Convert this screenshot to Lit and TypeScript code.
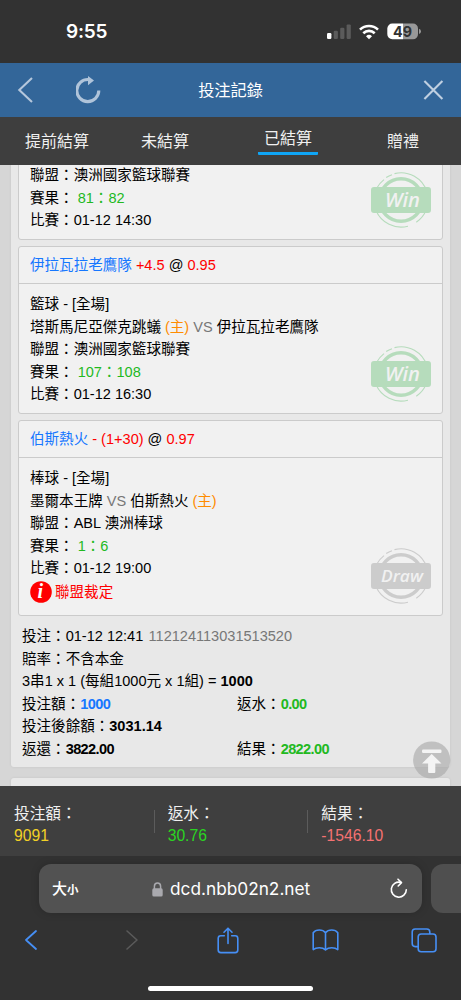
import { LitElement, html, css, svg, nothing } from "lit";
import { customElement, property } from "lit/decorators.js";

@customElement("result-stamp")
class ResultStamp extends LitElement {
  @property() kind = "Win";
  static styles = css`
    :host { display: block; width: 60px; height: 56px; }
    svg { display: block; }
    .win { color: #b6dcbc; }
    .draw { color: #cccccc; }
    text { font-family: "Open Sans", sans-serif; font-style: italic; font-weight: 600; fill: #f1f1f1; }
  `;
  render() {
    const win = this.kind === "Win";
    return html`<svg class=${win ? "win" : "draw"} width="60" height="56" viewBox="0 0 60 56">
      <circle cx="30" cy="28" r="21.3" fill="none" stroke="currentColor" stroke-width="3.4"/>
      <g fill="none" stroke="currentColor" stroke-width="1.1">
        <path d="M23.5 1.6A27.2 27.2 0 0 1 56 20"/>
        <path d="M15.2 5.5A27 27 0 0 1 21 2.7"/>
        <path d="M5.5 16.5A27 27 0 0 1 13 7.6"/>
        <path d="M5 38.5A27.2 27.2 0 0 0 37 54.2"/>
        <path d="M45.3 50.2A27 27 0 0 0 55 38.5"/>
      </g>
      <rect x="0" y="15" width="60" height="26" rx="3" fill="currentColor"/>
      ${win
        ? svg`<text x="14" y="35.4" font-size="19.5" textLength="35" lengthAdjust="spacingAndGlyphs">Win</text>`
        : svg`<text x="10" y="34.3" font-size="17" textLength="42" lengthAdjust="spacingAndGlyphs">Draw</text>`}
    </svg>`;
  }
}

interface Bet {
  head?: [string, string, string];
  sport?: string;
  home?: string;
  away?: string;
  host?: "home" | "away";
  league: string;
  score: string;
  time: string;
  ruling?: string;
  stamp: string;
}

const bets: Bet[] = [
  { league: "澳洲國家籃球聯賽", score: "81：82", time: "01-12 14:30", stamp: "Win" },
  {
    head: ["伊拉瓦拉老鷹隊", "+4.5", "0.95"], sport: "籃球", home: "塔斯馬尼亞傑克跳蟻", away: "伊拉瓦拉老鷹隊",
    host: "home", league: "澳洲國家籃球聯賽", score: "107：108", time: "01-12 16:30", stamp: "Win",
  },
  {
    head: ["伯斯熱火", "- (1+30)", "0.97"], sport: "棒球", home: "墨爾本王牌", away: "伯斯熱火",
    host: "away", league: "ABL 澳洲棒球", score: "1：6", time: "01-12 19:00", ruling: "聯盟裁定", stamp: "Draw",
  },
];

@customElement("app-root")
class AppRoot extends LitElement {
  static styles = css`
    :host {
      display: flex; flex-direction: column; width: 461px; height: 1000px; overflow: hidden;
      background: #323232; color: #000;
      font: 14.55px/22.6px "Liberation Sans", "Noto Sans CJK TC", sans-serif;
    }
    * { box-sizing: border-box; }
    svg { display: block; flex: none; }
    .status { height: 63px; flex: none; display: flex; align-items: center; padding: 0 40px 0 66px; color: #fff; }
    .clock { font: 600 19px/22px Inter, sans-serif; letter-spacing: -0.2px; flex: 1; }
    .indicators { display: flex; align-items: center; gap: 8px; }
    .indicators text { font: 700 14.5px Inter, sans-serif; fill: #323232; }
    .nav { height: 54px; flex: none; background: #336699; display: grid; grid-template-columns: 150px 1fr 150px; align-items: center; color: #fff; }
    .nav-left { display: flex; align-items: center; gap: 42px; padding-left: 17px; }
    .nav-right { display: flex; justify-content: flex-end; padding-right: 17px; }
    .title { text-align: center; font-size: 16.2px; }
    .tabs { height: 48px; flex: none; background: #3e3e3e; color: #f0f0f0; font-size: 16px; display: grid; grid-template-columns: 114px 102px 144px 86px; justify-items: center; align-items: center; }
    .tab { line-height: 24px; padding-top: 2px; }
    .tab.on { padding: 0 6px; border-bottom: 3px solid #0fa5f5; line-height: 26px; margin-top: -1px; border-radius: 1px; }
    .scroll { height: 621px; flex: none; overflow: hidden; background: #d6d6d6; position: relative; }
    .group { margin: 0 11px; padding: 0 7px 7px; background: #e8e8e8; border-radius: 3px; box-shadow: 0 0 3px rgba(0,0,0,.07); }
    .group.main { margin-top: -11px; }
    .group.next { margin-top: 11px; height: 60px; }
    .card { position: relative; background: #f1f1f1; border: 1px solid #cbcbcb; border-radius: 3px; margin-bottom: 6px; }
    .card:last-of-type { margin-bottom: 0; }
    .head { height: 37px; line-height: 37px; padding: 0 11px; border-bottom: 1px solid #cbcbcb; }
    .body { padding: 9px 11px 7px; }
    .body.partial { padding-bottom: 7.2px; }
    .stamp { position: absolute; right: 11px; bottom: 11px; }
    .blue { color: #1677ff; }
    .red { color: #ff0000; }
    .orange { color: #ff8c00; }
    .green { color: #22b91f; }
    .gray { color: #777; }
    .ruling { display: flex; align-items: center; gap: 3px; height: 25px; margin-bottom: 3px; color: #ff0000; }
    .ruling text { font: italic 700 20px "Liberation Serif", serif; fill: #fff; }
    .summary { padding: 9px 4px 0; }
    .pair { display: grid; grid-template-columns: 215px 1fr; }
    .pair b { letter-spacing: -0.6px; }
    .top { position: absolute; left: 413px; top: 576px; }
    .totals { height: 70px; flex: none; background: #3f3f3f; color: #f0f0f0; display: grid; grid-template-columns: repeat(3, 1fr); align-items: start; padding-top: 17px; font-size: 15.7px; line-height: 22px; }
    .total { padding-left: 14px; position: relative; }
    .total + .total::before { content: ""; position: absolute; left: 0; top: 7px; width: 1px; height: 23px; background: #5c5c5c; }
    .yellow { color: #f2d026; }
    .lime { color: #2bd422; }
    .pink { color: #f47272; }
    .bar { display: flex; gap: 9px; padding: 8px 0 0 39px; height: 57px; flex: none; }
    .address { width: 383px; height: 49px; flex: none; border-radius: 12px; background: #525252; color: #fff; display: grid; grid-template-columns: 113px 1fr 32px; align-items: center; box-shadow: 0 0 8px rgba(0,0,0,.18); }
    .aa { padding-left: 13px; font: 500 15px/20px "Noto Sans CJK TC", sans-serif; }
    .small { font-size: 11.5px; font-weight: 700; }
    .url { display: flex; align-items: center; gap: 7px; font: 400 17.25px/24px Inter, sans-serif; padding-top: 1px; }
    .side { width: 60px; height: 49px; flex: none; border-radius: 12px; background: #4f4f4f; }
    .tools { height: 54px; flex: none; display: grid; grid-template-columns: 101px 92px 95px 99px 26px; align-items: center; padding-left: 24px; color: #468ff5; }
    .dim { color: #5a5a5a; }
    .home { width: 165px; height: 5px; border-radius: 3px; background: #fff; margin: 19px auto 0; }
  `;

  private team(name: string, host: boolean) {
    return html`${name}${host ? html` <span class="orange">(主)</span>` : nothing}`;
  }

  private card(b: Bet) {
    return html`<section class="card">
      ${b.head ? html`<div class="head"><span class="blue">${b.head[0]}</span> <span class="red">${b.head[1]}</span> @ <span class="red">${b.head[2]}</span></div>` : nothing}
      <div class="body ${b.head ? "" : "partial"}">
        ${b.sport ? html`<div>${b.sport} - [全場]</div>
          <div>${this.team(b.home!, b.host === "home")} <span class="gray">VS</span> ${this.team(b.away!, b.host === "away")}</div>` : nothing}
        <div>聯盟：${b.league}</div>
        <div>賽果： <span class="green">${b.score}</span></div>
        <div>比賽：${b.time}</div>
        ${b.ruling ? html`<div class="ruling">
          <svg width="22" height="22" viewBox="0 0 22 22"><circle cx="11" cy="11" r="10.8" fill="#f00"/><text x="7.6" y="17.3">i</text></svg>
          <span>${b.ruling}</span></div>` : nothing}
      </div>
      <result-stamp class="stamp" .kind=${b.stamp}></result-stamp>
    </section>`;
  }

  render() {
    return html`
      <div class="status">
        <div class="clock">9:55</div>
        <div class="indicators">
          <svg width="24" height="16" viewBox="0 0 24 16">
            <rect x="0" y="9" width="4.4" height="6" rx="1.2" fill="#fff"/>
            <g fill="#5b5b5b"><rect x="6.7" y="6.7" width="4.2" height="8.3" rx="1.2"/><rect x="13.2" y="3.7" width="4.2" height="11.3" rx="1.2"/><rect x="19.6" y="0.4" width="4.2" height="14.6" rx="1.2"/></g>
          </svg>
          <svg width="20" height="16" viewBox="0 0 20 16" fill="none" stroke="#fff" stroke-width="2.6">
            <path d="M1 5.6A13 13 0 0 1 19 5.6"/><path d="M4.3 9.2A8.2 8.2 0 0 1 15.7 9.2"/>
            <path d="M10 15.2L7 12.2A4.4 4.4 0 0 1 13 12.2Z" fill="#fff" stroke="none"/>
          </svg>
          <svg width="34" height="17" viewBox="0 0 34 17">
            <path d="M16 0.5H5.5A5 5 0 0 0 .3 5.5V11A5 5 0 0 0 5.5 16.2H16Z" fill="#fff"/>
            <path d="M16 0.5H26A5 5 0 0 1 31 5.5V11A5 5 0 0 1 26 16.2H16Z" fill="#999"/>
            <path d="M32 5.8Q34 6.6 34 8.4T32 11Z" fill="#999"/>
            <text x="6" y="13.6" textLength="19" lengthAdjust="spacingAndGlyphs">49</text>
          </svg>
        </div>
      </div>
      <div class="nav">
        <div class="nav-left">
          <svg width="17" height="28" viewBox="0 0 17 28" fill="none" stroke="#b5c7dc" stroke-width="2.1"><path d="M15 2L2.3 14L15 26"/></svg>
          <svg width="26" height="28" viewBox="0 0 26 28"><path d="M12.5 3.6A11 11 0 1 0 22.8 14.5" fill="none" stroke="#b0c4da" stroke-width="3.1"/><path d="M12 0L18 4.5L12 9.2Z" fill="#b0c4da"/></svg>
        </div>
        <div class="title">投注記錄</div>
        <div class="nav-right"><svg width="21" height="20" viewBox="0 0 21 20" fill="none" stroke="#c0d0e1" stroke-width="2.1"><path d="M1.4 1L19.4 19M19.4 1L1.4 19"/></svg></div>
      </div>
      <div class="tabs">
        <div class="tab">提前結算</div><div class="tab">未結算</div><div class="tab on">已結算</div><div class="tab">贈禮</div>
      </div>
      <div class="scroll">
        <div class="group main">
          ${bets.map((b) => this.card(b))}
          <div class="summary">
            <div>投注：01-12 12:41 <span class="gray">&hairsp;112124113031513520</span></div>
            <div>賠率：不含本金</div>
            <div>3串1 x 1 (每組1000元 x 1組) = <b>1000</b></div>
            <div class="pair"><span>投注額：<b class="blue">1000</b></span><span>返水：<b class="green">0.00</b></span></div>
            <div>投注後餘額：<b>3031.14</b></div>
            <div class="pair"><span>返還：<b>3822.00</b></span><span>結果：<b class="green">2822.00</b></span></div>
          </div>
        </div>
        <div class="group next"></div>
        <svg class="top" width="38" height="38" viewBox="0 0 38 38"><circle cx="18.7" cy="19" r="18.6" fill="#a8a8a8" fill-opacity=".62"/><rect x="9" y="8.6" width="19.5" height="3.3" rx="1.2" fill="#f4f4f4"/><path d="M18.7 13L28.5 22.5H22.3V31Q22.3 32 21.3 32H16.1Q15.1 32 15.1 31V22.5H9Z" fill="#f4f4f4"/></svg>
      </div>
      <div class="totals">
        <div class="total"><div>投注額：</div><div class="yellow">9091</div></div>
        <div class="total"><div>返水：</div><div class="lime">30.76</div></div>
        <div class="total"><div>結果：</div><div class="pink">-1546.10</div></div>
      </div>
      <div class="bar">
        <div class="address">
          <div class="aa">大<span class="small">小</span></div>
          <div class="url">
            <svg width="11" height="15" viewBox="0 0 11 15"><path d="M2.4 7V4.2A3.1 3.3 0 0 1 8.6 4.2V7" fill="none" stroke="#a9a9ae" stroke-width="1.5"/><rect x=".3" y="6.3" width="10.4" height="8.2" rx="1.6" fill="#a9a9ae"/></svg>
            <span>dcd.nbb02n2.net</span>
          </div>
          <svg width="18" height="21" viewBox="0 0 18 21" fill="none" stroke="#fff" stroke-width="1.6" stroke-linecap="round" stroke-linejoin="round"><path d="M10.6 4.4A7.5 7.5 0 1 0 16.3 11.7"/><path d="M8 1.2L11.5 4.6L8.2 8"/></svg>
        </div>
        <div class="side"></div>
      </div>
      <div class="tools">
        <svg width="14" height="22" viewBox="0 0 14 22" fill="none" stroke="currentColor" stroke-width="1.8" stroke-linecap="round" stroke-linejoin="round"><path d="M12 2L2 11L12 20"/></svg>
        <svg class="dim" width="14" height="22" viewBox="0 0 14 22" fill="none" stroke="currentColor" stroke-width="1.6" stroke-linecap="round" stroke-linejoin="round"><path d="M2 2L12 11L2 20"/></svg>
        <svg width="22" height="27" viewBox="0 0 22 27" fill="none" stroke="currentColor" stroke-width="1.6" stroke-linecap="round" stroke-linejoin="round"><path d="M7.3 8.8H3.8Q1.2 8.8 1.2 11.4V23Q1.2 25.6 3.8 25.6H18.2Q20.8 25.6 20.8 23V11.4Q20.8 8.8 18.2 8.8H14.7"/><path d="M11 16.5V1.2M7 5.2L11 1.2L15 5.2"/></svg>
        <svg width="27" height="22" viewBox="0 0 27 22" fill="none" stroke="currentColor" stroke-width="1.6" stroke-linejoin="round"><path d="M13.5 3.8Q11.4 1 7.3 1T1.2 3.8V20.6Q3.4 18.8 7.3 18.8T13.5 20.8Q15.8 18.8 19.7 18.8T25.8 20.6V3.8Q23.8 1 19.7 1T13.5 3.8V20.8"/></svg>
        <svg width="26" height="25" viewBox="0 0 26 25" fill="none" stroke="currentColor" stroke-width="1.6"><rect x="7.2" y="6" width="17.8" height="17.8" rx="3"/><path d="M7 18.6H4.2Q1.2 18.6 1.2 15.6V4Q1.2 1 4.2 1H15.8Q18.8 1 18.8 4V6"/></svg>
      </div>
      <div class="home"></div>
    `;
  }
}
